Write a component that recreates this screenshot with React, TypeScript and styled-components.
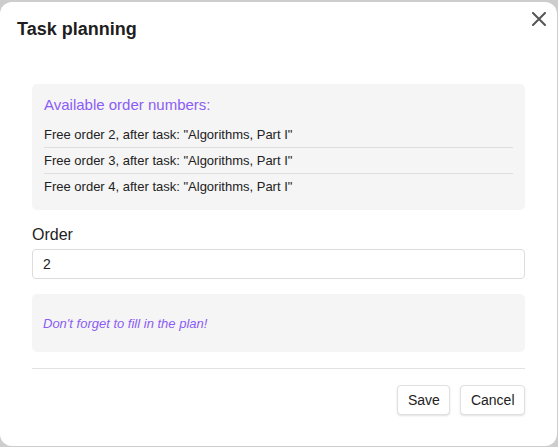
import styled, { createGlobalStyle } from "styled-components";

const GlobalStyle = createGlobalStyle`
  html, body {
    margin: 0;
    padding: 0;
    background: #cdcdcd;
    font-family: "Liberation Sans", Arial, sans-serif;
  }
  body {
    padding-top: 2px;
  }
`;

const orders = [2, 3, 4];

export default function App() {
  return (
    <>
      <GlobalStyle />
      <Dialog>
        <Header>
          <Title>Task planning</Title>
          <CloseButton aria-label="Close">
            <svg width="14" height="14" viewBox="0 0 14 14">
              <path d="M1 1 L13 13 M13 1 L1 13" stroke="#555" strokeWidth="2" strokeLinecap="round" />
            </svg>
          </CloseButton>
        </Header>

        <Body>
          <InfoBox>
            <InfoTitle>Available order numbers:</InfoTitle>
            {orders.map((n) => (
              <OrderRow key={n}>Free order {n}, after task: "Algorithms, Part I"</OrderRow>
            ))}
          </InfoBox>

          <Label htmlFor="order">Order</Label>
          <Input id="order" defaultValue="2" />

          <NoteBox>
            <Note>Don't forget to fill in the plan!</Note>
          </NoteBox>

          <Divider />

          <Footer>
            <Button>Save</Button>
            <Button>Cancel</Button>
          </Footer>
        </Body>
      </Dialog>
    </>
  );
}

const Dialog = styled.div`
  width: 557px;
  height: 444px;
  background: #fff;
  border-radius: 12px;
  box-sizing: border-box;
  overflow: hidden;
`;

const Header = styled.div`
  display: flex;
  justify-content: space-between;
  align-items: flex-start;
  padding: 10px 11px 0 17px;
  height: 82px;
  box-sizing: border-box;
`;

const Title = styled.h2`
  margin: 6px 0 0;
  font-size: 18px;
  font-weight: 700;
  line-height: 22px;
  color: #1e1e1e;
`;

const CloseButton = styled.button`
  border: none;
  background: none;
  padding: 0;
  display: flex;
  cursor: pointer;
`;

const Body = styled.div`
  padding: 0 32px;
  display: flex;
  flex-direction: column;
`;

const InfoBox = styled.div`
  background: #f5f5f5;
  border-radius: 5px;
  padding: 12px 12px 11px;
`;

const InfoTitle = styled.div`
  color: #8b5cf6;
  font-size: 15px;
  line-height: 18px;
  margin-bottom: 8px;
`;

const OrderRow = styled.div`
  font-size: 13px;
  line-height: 25px;
  color: #222;
  border-bottom: 1px solid #dedede;

  &:last-child {
    border-bottom: none;
  }
`;

const Label = styled.label`
  margin-top: 15px;
  font-size: 16px;
  line-height: 20px;
  color: #222;
`;

const Input = styled.input`
  margin-top: 4px;
  height: 30px;
  box-sizing: border-box;
  border: 1px solid #dcdcdc;
  border-radius: 4px;
  padding: 0 10px;
  font-family: inherit;
  font-size: 14px;
  color: #222;
  outline: none;
`;

const NoteBox = styled.div`
  margin-top: 15px;
  height: 58px;
  background: #f5f5f5;
  border-radius: 5px;
  padding: 0 11px;
  display: flex;
  align-items: center;
`;

const Note = styled.em`
  color: #8b5cf6;
  font-size: 13px;
`;

const Divider = styled.hr`
  margin: 16px 0 0;
  border: none;
  border-top: 1px solid #e2e2e2;
`;

const Footer = styled.div`
  display: flex;
  justify-content: flex-end;
  gap: 10px;
  margin-top: 16px;
`;

const Button = styled.button`
  height: 30px;
  padding: 0 9.5px;
  background: #fff;
  border: 1px solid #e0e0e0;
  border-radius: 4px;
  box-shadow: 0 1px 2px rgba(0, 0, 0, 0.12);
  font-family: inherit;
  font-size: 14px;
  color: #222;
  cursor: pointer;
`;
